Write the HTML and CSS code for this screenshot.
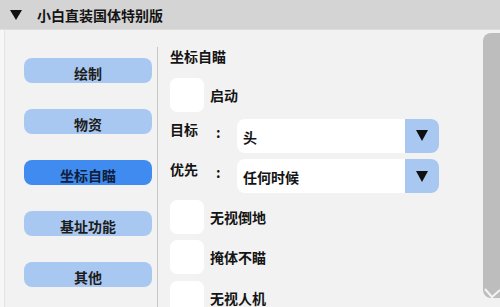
FILE: index.html
```html
<!DOCTYPE html>
<html>
<head>
<meta charset="utf-8">
<link rel="stylesheet" href="styles.css">
</head>
<body>
<div class="window">
  <div class="header">
    <svg class="tri" width="12" height="10" viewBox="0 0 12 10"><polygon points="0,0 12,0 6,10" fill="#111"/></svg>
    <span class="title">小白直装国体特别版</span>
  </div>
  <div class="content">
    <div class="sidebar">
      <div class="nav">绘制</div>
      <div class="nav">物资</div>
      <div class="nav active">坐标自瞄</div>
      <div class="nav">基址功能</div>
      <div class="nav">其他</div>
    </div>
    <div class="divider"></div>
    <div class="panel">
      <div class="panel-title">坐标自瞄</div>
      <div class="list">
        <div class="check-row"><span class="box"></span><span class="label">启动</span></div>
        <div class="select-row">
          <span class="sel-label">目标</span><span class="colon">:</span>
          <div class="select"><span class="value">头</span><span class="arrow"><svg width="12" height="11" viewBox="0 0 12 11"><polygon points="0,0 12,0 6,11" fill="#111"/></svg></span></div>
        </div>
        <div class="select-row">
          <span class="sel-label">优先</span><span class="colon">:</span>
          <div class="select"><span class="value">任何时候</span><span class="arrow"><svg width="12" height="11" viewBox="0 0 12 11"><polygon points="0,0 12,0 6,11" fill="#111"/></svg></span></div>
        </div>
        <div class="check-row"><span class="box"></span><span class="label">无视倒地</span></div>
        <div class="check-row"><span class="box"></span><span class="label">掩体不瞄</span></div>
        <div class="check-row"><span class="box"></span><span class="label">无视人机</span></div>
      </div>
    </div>
    <div class="scrollbar">
      <svg class="grip" width="17" height="14" viewBox="0 0 17 14"><path d="M2 3 L9 11 L17 4" stroke="#f4f4f4" stroke-width="2" fill="none"/></svg>
    </div>
  </div>
</div>
</body>
</html>
```
FILE: styles.css
```css
* { box-sizing: border-box; }
html, body { margin: 0; padding: 0; }
body {
  width: 500px;
  height: 307px;
  overflow: hidden;
  font-family: "Noto Sans CJK SC", "Noto Sans", sans-serif;
  font-weight: 700;
  font-size: 14px;
  color: #141414;
  background: #f2f2f2;
}
.window { width: 500px; height: 307px; overflow: hidden; display: flex; flex-direction: column; }
.header {
  height: 30px;
  flex: none;
  background: #d4d4d4;
  border-bottom: 1px solid #dedede;
  display: flex;
  align-items: center;
  padding-left: 10px;
}
.tri { margin-top: 0; }
.title { margin-left: 15px; line-height: 18px; }
.content {
  flex: 1;
  display: flex;
  background: #f2f2f2;
  border-left: 1px solid #f6f6f6;
  box-shadow: inset 3px 0 0 #f7f7f7, inset 4px 0 0 #e4e4e4;
  min-height: 0;
}
.sidebar {
  width: 156px;
  flex: none;
  padding: 28px 0 0 23px;
  display: flex;
  flex-direction: column;
  gap: 26px;
}
.nav {
  width: 128px;
  height: 25px;
  border-radius: 8px;
  background: #a9c8f1;
  text-align: center;
  line-height: 18px;
  padding-top: 6px;
  color: #1c1c1c;
}
.nav.active { background: #3f8bef; color: #10203c; }
.divider {
  width: 1px;
  flex: none;
  margin-top: 17px;
  background: #c6c6c6;
}
.panel {
  flex: 1;
  padding-left: 12px;
}
.panel-title {
  margin-top: 17px;
  line-height: 18px;
}
.list {
  margin-top: 13px;
  display: flex;
  flex-direction: column;
  gap: 6.5px;
}
.check-row {
  height: 34px;
  display: flex;
  align-items: center;
}
.box {
  width: 34px;
  height: 34px;
  background: #ffffff;
  border-radius: 7px;
  flex: none;
}
.label { margin-left: 6px; line-height: 18px; }
.select-row {
  height: 34px;
  display: flex;
  align-items: flex-start;
}
.sel-label { width: 46px; line-height: 18px; padding-top: 1px; }
.colon { width: 21px; line-height: 18px; padding-top: 4px; font-weight: 700; }
.select {
  width: 202px;
  height: 34px;
  display: flex;
  border-radius: 8px;
  overflow: hidden;
  background: #ffffff;
}
.value { flex: 1; line-height: 34px; padding-left: 6px; padding-top: 1px; }
.arrow {
  width: 34px;
  background: #a9c8f1;
  display: flex;
  align-items: center;
  justify-content: center;
}
.scrollbar {
  width: 17px;
  flex: none;
  margin-left: auto;
  margin-top: 3px;
  height: 265px;
  background: #bdbdbd;
  border-radius: 8px 0 0 8px;
  position: relative;
}
.grip { position: absolute; left: 0; bottom: -2px; }
```
